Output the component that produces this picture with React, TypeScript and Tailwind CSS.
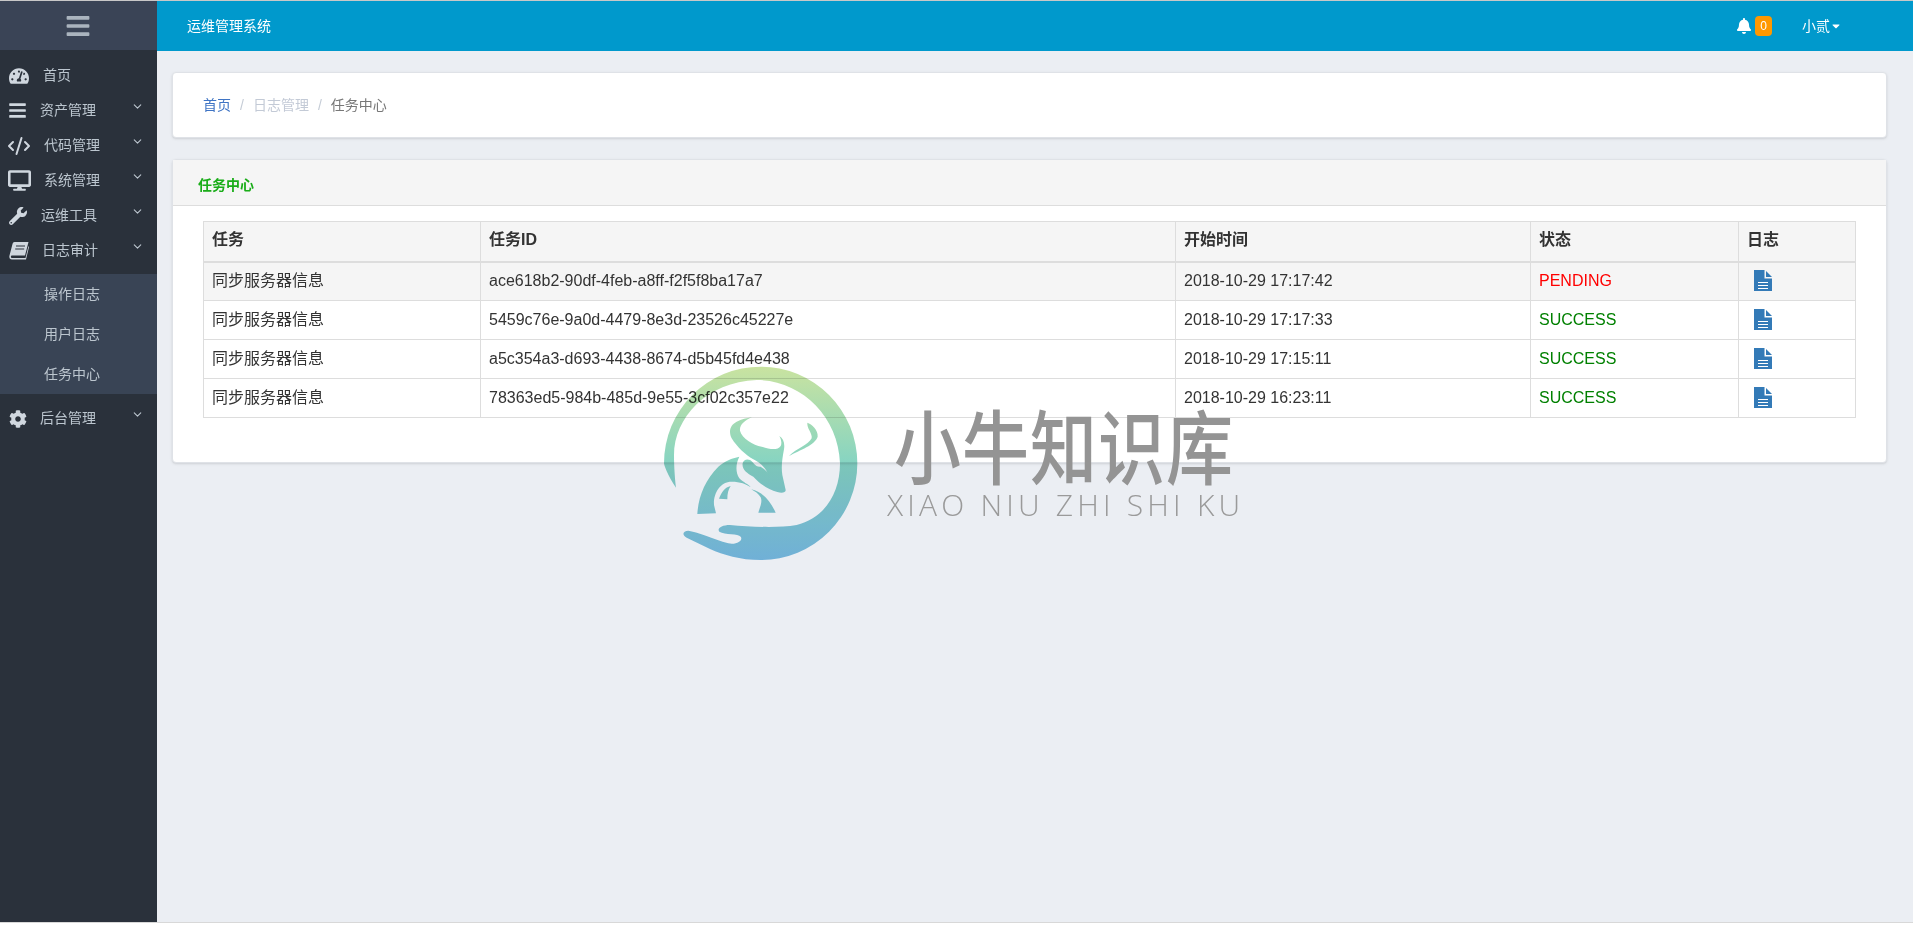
import { FaBars, FaBell, FaCaretDown, FaCog, FaDesktop, FaTachometerAlt, FaWrench } from 'react-icons/fa';
import { ChevronDown, CodeXml } from 'lucide-react';

const cjk = { fontFamily: '"Liberation Sans", "Noto Sans CJK SC", sans-serif' };

const Row = ({ icon, label, labelClass, open }: any) => (
  <div className="h-[35px] flex items-center relative text-[14px] text-[#bcc6cf]">
    <span className="w-[38px] pl-[9px] text-[#d0d7df]">{icon}</span>
    <span className={labelClass}>{label}</span>
    {open && <ChevronDown size={13} strokeWidth={2} className="absolute left-[131px] top-[7px]" />}
  </div>
);

const BookIcon = () => (
  <svg width="20" height="18" viewBox="0 0 20 18">
    <path fill="#d0d7df" d="M5.5 0H19.5L16 13.5H3C1.5 13.5 1.5 16 3 16H16.5L19.5 4L20 5L17 17.5H3C.5 17.5 0 15.5 .5 13.5L3.5 2C3.8.8 4.5 0 5.5 0Z" />
    <path stroke="#2a313b" strokeWidth="1" d="M7 4H16M6.2 7H15.2" />
  </svg>
);

const FileIcon = () => (
  <svg width="18" height="21" viewBox="0 0 18 21" className="block -mt-[2px]">
    <path fill="#337ab7" d="M0 0H10.5V8.5H18V21H0Z" />
    <path fill="#337ab7" d="M12 1L18 7H12Z" />
    <path stroke="#ffffff" strokeWidth="1.2" d="M4 12.5H14M4 15.5H14M4 18.5H14" />
  </svg>
);

const Watermark = () => (
  <svg width="230" height="220" viewBox="0 0 690 660" className="absolute left-0 top-0 mix-blend-multiply">
    <defs>
      <linearGradient id="wm" gradientUnits="userSpaceOnUse" x1="0" y1="35" x2="0" y2="615">
        <stop offset="0" stopColor="#c9e3a0" />
        <stop offset="0.5" stopColor="#86d4c2" />
        <stop offset="1" stopColor="#7abde2" />
      </linearGradient>
    </defs>
    <g fill="url(#wm)">
      <path d="M78 398C52 360 42 330 42 325A290 290 0 1 1 332 615C270 615 220 600 180 582L110 548C95 540 98 528 115 527C140 530 190 552 235 565C262 570 280 555 272 545C265 535 225 540 208 530C200 520 215 510 240 510C300 515 380 520 440 510C520 490 570 420 570 325C565 180 450 75 320 75C170 80 72 190 72 300C72 335 75 375 78 398Z" />
      <path d="M306 187C285 195 268 210 270 227C275 250 310 270 335 275C360 283 382 287 392 273C397 263 392 250 388 243C400 250 405 265 402 283C397 310 393 335 397 360L407 405C408 413 395 415 382 411C355 403 330 387 310 365C290 355 275 343 278 325C280 315 290 311 300 315C310 320 315 337 332 335C340 340 348 347 352 353C345 335 325 320 310 313C290 303 260 275 245 250C235 230 240 210 260 200C275 193 290 189 306 187Z" />
      <path d="M268 305C258 325 255 350 268 370C280 383 295 387 302 397C290 387 270 380 245 380C210 380 190 415 192 450L198 475L142 477C145 425 165 375 205 335C225 317 245 310 268 305Z" />
      <path d="M242 393C225 397 215 410 207 431L232 433C232 415 235 403 242 393Z" />
      <path d="M304 403C335 410 360 435 377 473L325 473C330 455 338 440 332 427C325 415 315 410 304 403Z" />
      <path d="M472 203C485 207 505 225 503 245C495 270 450 285 417 303C440 280 475 270 485 250C488 235 470 220 472 203Z" />
    </g>
  </svg>
);

const rows = [
  ['ace618b2-90df-4feb-a8ff-f2f5f8ba17a7', '2018-10-29 17:17:42', 'PENDING'],
  ['5459c76e-9a0d-4479-8e3d-23526c45227e', '2018-10-29 17:17:33', 'SUCCESS'],
  ['a5c354a3-d693-4438-8674-d5b45fd4e438', '2018-10-29 17:15:11', 'SUCCESS'],
  ['78363ed5-984b-485d-9e55-3cf02c357e22', '2018-10-29 16:23:11', 'SUCCESS'],
];

export default function App() {
  return (
    <div className="h-[925px] flex flex-col bg-white relative overflow-hidden" style={cjk}>
      <div className="h-px bg-[#c8c8c8]" />
      <div className="flex h-[921px]">
        <aside className="w-[157px] shrink-0 bg-[#2a313b]">
          <div className="h-[49px] bg-[#3a4456] flex items-center justify-center text-[#aab4be]">
            <FaBars className="text-[26px] -ml-[2px]" />
          </div>
          <div className="pt-[8px] pb-[6px]">
            <Row icon={<FaTachometerAlt className="text-[20px]" />} label="首页" labelClass="ml-[5px]" />
            <Row icon={<FaBars className="text-[19px] -ml-px" />} label="资产管理" labelClass="ml-[2px]" open />
            <Row icon={<CodeXml size={24} className="-ml-[2px]" />} label="代码管理" labelClass="ml-[6px]" open />
            <Row icon={<FaDesktop className="text-[23px] -ml-px" />} label="系统管理" labelClass="ml-[6px]" open />
            <Row icon={<FaWrench className="text-[18px]" />} label="运维工具" labelClass="ml-[3px]" open />
            <Row icon={<BookIcon />} label="日志审计" labelClass="ml-[4px]" open />
          </div>
          <div className="bg-[#394455] h-[120px] flex flex-col text-[14px] text-[#bcc6cf] pl-[44px]">
            <div className="h-[40px] flex items-center">操作日志</div>
            <div className="h-[40px] flex items-center">用户日志</div>
            <div className="h-[40px] flex items-center">任务中心</div>
          </div>
          <div className="pt-[7px]">
            <Row icon={<FaCog className="text-[18px]" />} label="后台管理" labelClass="ml-[2px]" open />
          </div>
        </aside>
        <div className="flex-1 flex flex-col bg-[#ebeef3]">
          <header className="h-[50px] bg-[#0099cc] flex items-center text-white text-[14px] pl-[30px]">
            <span>运维管理系统</span>
            <div className="ml-auto flex items-center">
              <FaBell className="text-[16px]" />
              <span className="ml-[3px] w-[17px] h-[20px] rounded-[4px] bg-[#ff9800] text-[12px] flex items-center justify-center">0</span>
              <span className="ml-[30px]">小贰</span>
              <FaCaretDown className="text-[12px]" />
              <span className="w-[71px]" />
            </div>
          </header>
          <main className="pl-[15px] pr-[26px] pt-[21px]">
            <div className="h-[66px] bg-white rounded-[4px] border border-[#dfe2e7] shadow-sm flex items-center pl-[30px] text-[14px] mb-[21px]">
              <span className="text-[#3f74c4]">首页</span>
              <span className="mx-[9px] text-[#c5ccd6]">/</span>
              <span className="text-[#c3cad6]">日志管理</span>
              <span className="mx-[9px] text-[#c5ccd6]">/</span>
              <span className="text-[#777777]">任务中心</span>
            </div>
            <div className="h-[304px] bg-white rounded-[4px] border border-[#dfe2e7] shadow-sm">
              <div className="h-[46px] bg-[#f5f5f5] border-b border-[#dddddd] flex items-center pl-[25px] pt-[6px] text-[14px] font-bold text-[#1aad19]">任务中心</div>
              <div className="pl-[30px] pr-[30px] pt-[15px]">
                <table className="w-full border-collapse table-fixed text-[16px] text-[#333333]">
                  <colgroup>
                    <col className="w-[277px]" />
                    <col className="w-[695px]" />
                    <col className="w-[355px]" />
                    <col className="w-[208px]" />
                    <col />
                  </colgroup>
                  <thead>
                    <tr className="bg-[#f5f5f5] h-[40px] text-left">
                      {['任务', '任务ID', '开始时间', '状态', '日志'].map(h => (
                        <th key={h} className="border border-[#dddddd] border-b-2 px-[8px] font-bold pb-[2px]">{h}</th>
                      ))}
                    </tr>
                  </thead>
                  <tbody>
                    {rows.map((r, i) => (
                      <tr key={r[0]} className={i === 0 ? 'h-[39px] bg-[#f5f5f5]' : 'h-[39px]'}>
                        <td className="border border-[#dddddd] px-[8px]">同步服务器信息</td>
                        <td className="border border-[#dddddd] px-[8px]">{r[0]}</td>
                        <td className="border border-[#dddddd] px-[8px]">{r[1]}</td>
                        <td className={r[2] === 'PENDING' ? 'border border-[#dddddd] px-[8px] text-[#ff0000]' : 'border border-[#dddddd] px-[8px] text-[#008000]'}>{r[2]}</td>
                        <td className="border border-[#dddddd] px-[15px]"><FileIcon /></td>
                      </tr>
                    ))}
                  </tbody>
                </table>
              </div>
            </div>
          </main>
        </div>
      </div>
      <div className="h-px bg-[#d8d8d8]" />
      <div className="absolute left-[650px] top-[355px] w-[600px] h-[220px] pointer-events-none">
        <Watermark />
        <div className="absolute left-[244px] top-[43px] text-[67px] leading-[90px] font-medium text-[#949494] tracking-[1px] whitespace-nowrap scale-y-[1.2]" style={{ fontFamily: '"Noto Sans CJK SC", sans-serif' }}>小牛知识库</div>
        <div className="absolute left-[237px] top-[125px] text-[30px] leading-[50px] text-[#9a9a9a] tracking-[4.2px] whitespace-nowrap font-light" style={{ fontFamily: '"Open Sans", sans-serif' }}>XIAO NIU ZHI SHI KU</div>
      </div>
    </div>
  );
}
